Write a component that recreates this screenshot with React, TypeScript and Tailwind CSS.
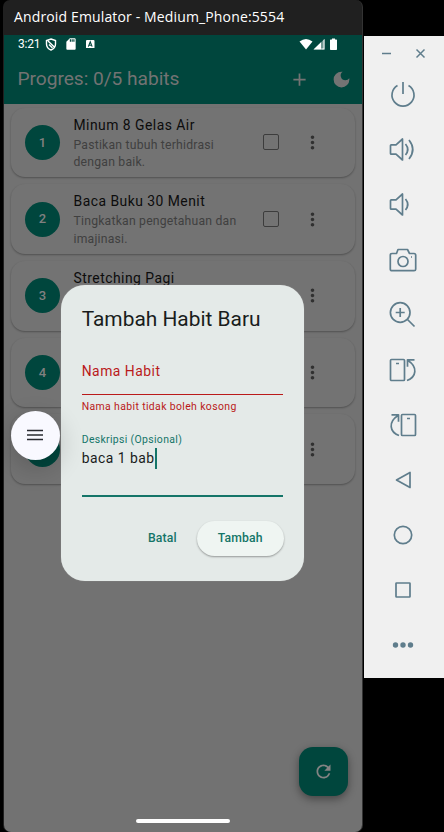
import React from "react";
import { MdAdd, MdDarkMode, MdMoreVert, MdRefresh, MdSdCard } from "react-icons/md";

const habits = [
  { title: "Minum 8 Gelas Air", desc: ["Pastikan tubuh terhidrasi", "dengan baik."] },
  { title: "Baca Buku 30 Menit", desc: ["Tingkatkan pengetahuan dan", "imajinasi."] },
  { title: "Stretching Pagi", desc: ["", ""] },
  { title: "", desc: ["", ""] },
  { title: "", desc: ["", ""] },
];

function StatusBar() {
  return (
    <div className="flex h-[18px] items-center pl-[14px] pr-[23px] text-white">
      <span className="w-[27px] text-[12px] leading-none tracking-[-0.200px]">3:21</span>
      <svg className="mr-[8px] h-[13px] w-[12px]" viewBox="0 0 12 13" fill="none" stroke="#fff" strokeWidth="1.4">
        <path d="M6 1 10.500 2.500V6C10.500 9 8.700 11 6 12 3.300 11 1.500 9 1.500 6V2.500ZM3 3l6.300 6M4 6.500l3.500 3.500" />
      </svg>
      <MdSdCard className="mr-[7px] h-[14px] w-[14px] -translate-x-px" />
      <svg className="h-[8.500px] w-[8.500px]" viewBox="0 0 9 9">
        <rect width="9" height="9" rx="1" fill="#fff" />
        <path d="M2.500 7 4.500 2l2 5M3.200 5.500h2.600" fill="none" stroke="#00463d" strokeWidth="1.200" />
      </svg>
      <svg className="ml-auto h-[13px] w-[40px]" viewBox="0 0 40 13" fill="#fff">
        <path d="M.5 3.500Q7-1.500 13.500 3.500L7 11.500Z" />
        <path d="M14.500 11.500 25.500 1v10.500Z" fillOpacity=".45" />
        <path d="M14.500 11.500 22 4.300v7.200ZM24.500 2l1-1v10.500h-3.300v-1h2.300Z" />
        <path d="M33 .500h3v1h1.300q.700 0 .700.700v9q0 .800-.700.800h-5.600q-.700 0-.700-.800v-9q0-.700.700-.700H33Z" />
      </svg>
    </div>
  );
}

function HabitCard({ index }: { index: number }) {
  const habit = habits[index];
  return (
    <div className="flex h-[69.700px] shrink-0 items-center rounded-[14px] bg-[#737373] pl-[14px] shadow-[0_1px_2px_rgba(0,0,0,0.3)]">
      <div className="flex h-[35px] w-[35px] items-center justify-center rounded-full bg-[#00463d] text-[13px] font-medium text-[#808080]">
        {index + 1}
      </div>
      <div className="ml-[13.500px] h-[55.700px] w-[179px] whitespace-nowrap">
        <div className="h-[21px] text-[13.900px] leading-[20px] tracking-[0.480px] text-[#0c0c0c]">{habit.title}</div>
        {habit.desc.map((line, i) => (
          <div key={i} className="h-[17.400px] text-[12.200px] leading-[18px] tracking-[0.220px] text-[#404040]">{line}</div>
        ))}
      </div>
      <div className="ml-[10.500px] h-[16px] w-[16px] rounded-[2px] border-[1.500px] border-[#3c3c3c]" />
      <MdMoreVert className="ml-[23px] h-[21px] w-[21px] text-[#303030]" />
    </div>
  );
}

function Dialog() {
  return (
    <div className="absolute left-[56.700px] top-[249.500px] flex h-[296px] w-[243.500px] flex-col rounded-[24px] bg-[#e4eae8] px-[21px] shadow-[0_0_1px_#ffffff66]">
      <h2 className="mt-[20px] h-[29px] text-[20.900px] leading-[28px] tracking-[0px] text-[#191d1c]">Tambah Habit Baru</h2>
      <div className="mt-[13.500px] flex h-[48px] items-center border-b border-[#ba1a1a] pt-[1px] text-[13.900px] tracking-[0.500px] text-[#ba1a1a]">Nama Habit</div>
      <div className="mt-[5px] h-[14px] text-[10.450px] leading-[14px] tracking-[0.370px] text-[#ba1a1a]">Nama habit tidak boleh kosong</div>
      <div className="mt-[18.500px] flex h-[64.500px] flex-col border-b-2 border-[#147568]">
        <div className="h-[14px] text-[10.450px] leading-[14px] tracking-[0.340px] text-[#147568]">Deskripsi (Opsional)</div>
        <div className="mt-[1px] flex h-[22px] items-center text-[13.900px] tracking-[0.480px] text-[#191d1c]">
          baca 1 bab<span className="h-[21px] w-[2px] bg-[#147568]" />
        </div>
      </div>
      <div className="-mr-[0.500px] mt-[24px] flex items-center justify-end text-[12.200px] font-medium tracking-[0.150px] text-[#147568]">
        <span className="mr-[20px]">Batal</span>
        <div className="flex h-[35px] w-[87px] items-center justify-center rounded-full bg-[#eff5f2] shadow-[0_1px_2px_rgba(0,0,0,0.35)]">Tambah</div>
      </div>
    </div>
  );
}

function Phone() {
  return (
    <div className="relative flex h-[797px] w-[358px] flex-col overflow-hidden rounded-b-[7px] bg-[#727272] font-[Roboto,sans-serif]">
      <div className="h-[68.500px] shrink-0 bg-[#00463d]">
        <StatusBar />
        <div className="flex h-[51px] items-center pl-[13.500px] text-[#737373]">
          <h1 className="w-[271px] pt-[2px] text-[19.200px] font-normal tracking-[-0.050px]">Progres: 0/5 habits</h1>
          <MdAdd className="mt-[2px] h-[21px] w-[21px]" />
          <MdDarkMode className="ml-[21px] mt-[2px] h-[21px] w-[21px]" />
        </div>
      </div>
      <div className="flex flex-col gap-[7px] px-[7px] pt-[4px]">
        {habits.map((_, i) => <HabitCard key={i} index={i} />)}
      </div>
      <Dialog />
      <div className="absolute left-[6.500px] top-[375.500px] flex h-[49px] w-[49px] items-center justify-center rounded-full bg-[#f9f9ff] shadow-[0_8px_26px_rgba(0,0,0,0.2)]">
        <svg width="16" height="12" stroke="#292b30" strokeWidth="1.600"><path d="M0 1.500h16M0 6h16M0 10.500h16" /></svg>
      </div>
      <div className="absolute left-[295px] top-[712px] flex h-[49px] w-[49px] items-center justify-center rounded-[14px] bg-[#00463d] text-[#838383] shadow-[0_3px_8px_rgba(0,0,0,0.4)]">
        <MdRefresh className="h-[21px] w-[21px]" />
      </div>
      <div className="absolute left-[131.500px] top-[784px] h-[4px] w-[94px] rounded-full bg-white" />
    </div>
  );
}

const toolIcons = [
  <path d="M9.500 5.500A11 11 0 1 0 20.500 5.500M15 2v12" />,
  <><path d="M2.500 10.500q0-.700.700-.700H8L14.500 4v21L8 19.200H3.200q-.700 0-.700-.700Z" /><path d="M17.500 9q4.500 5.500 0 11M21 5q7.500 9.500 0 19" /></>,
  <><path d="M2.500 10.500q0-.700.700-.700H8L14.500 4v21L8 19.200H3.200q-.700 0-.700-.700Z" /><path d="M17.500 9q4.500 5.500 0 11" /></>,
  <><path d="M4 8.500h4.500l1.500-4h9.500l2 4H26q1.700 0 1.700 1.700v14q0 1.500-1.700 1.500H4q-1.700 0-1.700-1.500v-14Q2.300 8.500 4 8.500Z" /><circle cx="15" cy="16.500" r="5" /><path d="M23 12h1" /></>,
  <><circle cx="12.200" cy="12.500" r="9.800" /><path d="m19.500 19.500 7 7M12.200 8v9M7.700 12.500h9" /></>,
  <><rect x="2.500" y="4.500" width="14" height="21" rx="1" /><path d="M8 8.500h3M19 25.500C28.500 22 30 12 20 5.500M26.500 4.800H19.500v7" /></>,
  <><rect x="13.500" y="4.500" width="14" height="21" rx="1" /><path d="M19 8.500h3M11 25.500C1.500 22 0 12 10 5.500M3.500 4.800h7v7" /></>,
  <path d="M22 7.500v15L8.500 15Z" />,
  <circle cx="15" cy="15" r="8.700" />,
  <rect x="8" y="8" width="14" height="14" rx=".5" />,
  <g fill="#5f7d8c" stroke="none"><circle cx="7.500" cy="15" r="2.700" /><circle cx="15" cy="15" r="2.700" /><circle cx="22.500" cy="15" r="2.700" /></g>,
];

function Toolbar() {
  return (
    <aside className="ml-[1px] mt-[36px] h-[642px] w-[80px] bg-[#f0f0f0]">
      <div className="flex h-[44px] pl-[17px] pt-[12px]">
        <svg width="48" height="12" fill="none" stroke="#5f7d8c" strokeWidth="1.500"><path d="M1 5.500h9M35.500 1.500l8 8M43.500 1.500l-8 8" /></svg>
      </div>
      <div className="flex flex-col gap-[25px] pl-[24px]">
        {toolIcons.map((icon, i) => (
          <svg key={i} className="h-[30px] w-[30px]" viewBox="0 0 30 30" fill="none" stroke="#5f7d8c" strokeWidth="1.700" strokeLinejoin="round">{icon}</svg>
        ))}
      </div>
    </aside>
  );
}

export default function App() {
  return (
    <div className="flex h-[832px] w-[444px] overflow-hidden bg-black">
      <div className="ml-[3px] flex h-[832px] w-[360px] flex-col rounded-t-[7px] rounded-b-[7px] border-r border-[#333] bg-[#202020]">
        <div className="flex h-[35px] items-center whitespace-nowrap pl-[11px] font-['Open_Sans',sans-serif] text-[14px] tracking-[0.140px] text-white">
          <span className="-translate-y-px">Android Emulator - Medium_Phone:5554</span>
        </div>
        <div className="pl-[1px]"><Phone /></div>
      </div>
      <Toolbar />
    </div>
  );
}
